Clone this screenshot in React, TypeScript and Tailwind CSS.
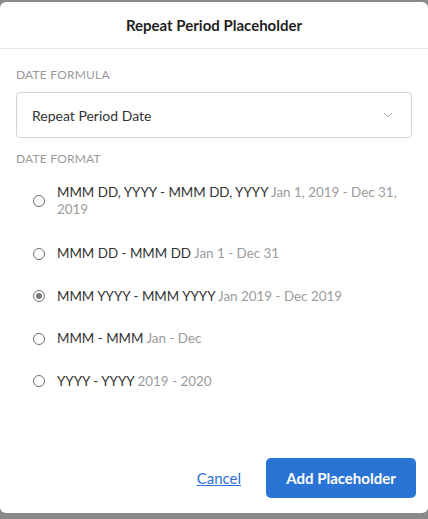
import { ChevronDown } from 'lucide-react'

const formats = [
  { id: 'full', label: 'MMM DD, YYYY - MMM DD, YYYY', example: 'Jan 1, 2019 - Dec 31, 2019' },
  { id: 'md', label: 'MMM DD - MMM DD', example: 'Jan 1 - Dec 31' },
  { id: 'my', label: 'MMM YYYY - MMM YYYY', example: 'Jan 2019 - Dec 2019' },
  { id: 'm', label: 'MMM - MMM', example: 'Jan - Dec' },
  { id: 'y', label: 'YYYY - YYYY', example: '2019 - 2020' },
]

function Radio({ checked }: { checked: boolean }) {
  return (
    <span className="flex h-[12px] w-[12px] shrink-0 items-center justify-center rounded-full border border-[#6f6f6f] bg-white">
      {checked && <span className="h-[6px] w-[6px] rounded-full bg-[#7a7a7a]" />}
    </span>
  )
}

export default function App() {
  const selected = 'my'
  return (
    <div className="flex h-[519px] w-[428px] flex-col bg-[#8a8a8a] pt-[2px] pb-[6px] font-['Lato',_sans-serif]">
      <div className="flex flex-1 flex-col rounded-[6px] bg-white">
        <div className="flex h-[47px] items-center justify-center border-b border-[#e6e6e6]">
          <h3 className="text-[15px] font-bold text-[#1f1f1f]">Repeat Period Placeholder</h3>
        </div>

        <div className="flex flex-col px-[16px]">
          <p className="mt-[17px] text-[12px] tracking-[0.2px] text-[#9a9a9a]">DATE FORMULA</p>
          <button
            type="button"
            className="mt-[8px] flex h-[46px] w-full items-center justify-between rounded-[4px] border border-[#d4d4d4] pr-[16px] pl-[15px] text-[14px] text-[#333]"
          >
            <span>Repeat Period Date</span>
            <ChevronDown size={14} strokeWidth={1.5} className="text-[#8a8a8a]" />
          </button>

          <p className="mt-[12px] text-[12px] tracking-[0.2px] text-[#9a9a9a]">DATE FORMAT</p>

          <div className="mt-[16px] flex flex-col gap-[25.5px] pl-[17px]">
            {formats.map((f, i) => (
              <label key={f.id} className={`flex items-center gap-[12px] ${i === 0 ? 'mb-[1.5px]' : ''}`}>
                <Radio checked={f.id === selected} />
                <span className="text-[13.4px] leading-[17px] text-[#333]">
                  {f.label} <span className="text-[#9b9b9b]">{f.example}</span>
                </span>
              </label>
            ))}
          </div>
        </div>

        <div className="mt-auto flex items-center justify-end gap-[25px] px-[12px] pb-[15px]">
          <a href="#" className="text-[15px] text-[#2d6fd0] underline">
            Cancel
          </a>
          <button
            type="button"
            className="h-[40px] w-[150px] rounded-[5px] bg-[#2a74d5] text-[15px] font-bold text-white"
          >
            Add Placeholder
          </button>
        </div>
      </div>
    </div>
  )
}
